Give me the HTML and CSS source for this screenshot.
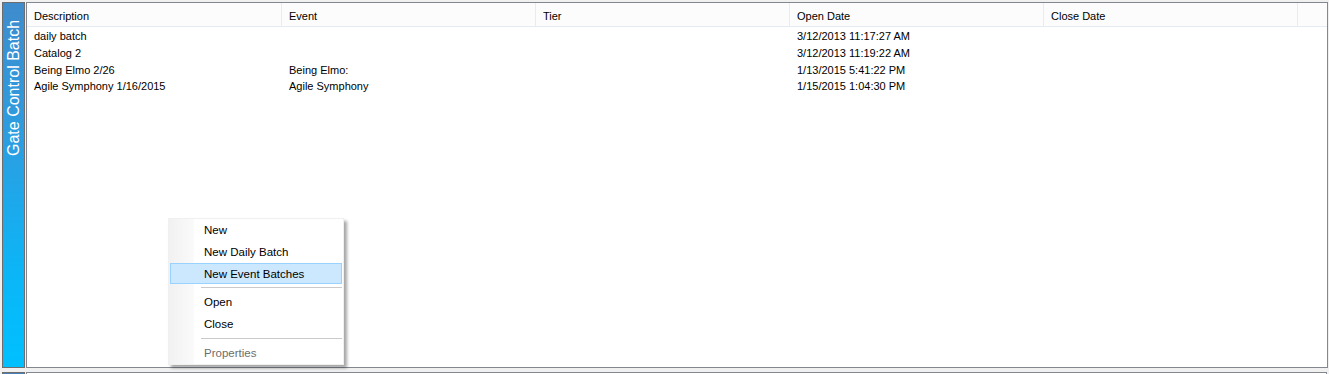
FILE: index.html
```html
<!DOCTYPE html>
<html lang="en">
<head>
    <meta charset="UTF-8">
    <title>Gate Control Batch</title>
    <link rel="stylesheet" href="styles.css">
</head>
<body>
    <div class="screen">
        <div class="dock">
            <div class="side-tab"><span>Gate Control Batch</span></div>
            <div class="grid-panel">
                <div class="grid-head">
                    <div class="col">Description</div>
                    <div class="col">Event</div>
                    <div class="col">Tier</div>
                    <div class="col">Open Date</div>
                    <div class="col">Close Date</div>
                    <div class="col filler"></div>
                </div>
                <div class="grid-body">
                    <div class="row">
                        <div class="col">daily batch</div>
                        <div class="col"></div>
                        <div class="col"></div>
                        <div class="col">3/12/2013 11:17:27 AM</div>
                        <div class="col"></div>
                    </div>
                    <div class="row">
                        <div class="col">Catalog 2</div>
                        <div class="col"></div>
                        <div class="col"></div>
                        <div class="col">3/12/2013 11:19:22 AM</div>
                        <div class="col"></div>
                    </div>
                    <div class="row">
                        <div class="col">Being Elmo 2/26</div>
                        <div class="col">Being Elmo:</div>
                        <div class="col"></div>
                        <div class="col">1/13/2015 5:41:22 PM</div>
                        <div class="col"></div>
                    </div>
                    <div class="row">
                        <div class="col">Agile Symphony 1/16/2015</div>
                        <div class="col">Agile Symphony</div>
                        <div class="col"></div>
                        <div class="col">1/15/2015 1:04:30 PM</div>
                        <div class="col"></div>
                    </div>
                </div>

                <!-- menu contextual -->
                <div class="context-menu">
                    <div class="menu-item">New</div>
                    <div class="menu-item">New Daily Batch</div>
                    <div class="menu-item active">New Event Batches</div>
                    <div class="menu-sep"></div>
                    <div class="menu-item">Open</div>
                    <div class="menu-item">Close</div>
                    <div class="menu-sep"></div>
                    <div class="menu-item disabled">Properties</div>
                </div>
            </div>
        </div>
        <div class="dock next">
            <div class="side-tab dark"></div>
            <div class="grid-panel"></div>
        </div>
    </div>
</body>
</html>
```

FILE: styles.css
```css
* {
    margin: 0;
    padding: 0;
    box-sizing: border-box;
}

body {
    background: #f0f0f0;
    font-family: 'Liberation Sans', Arial, sans-serif;
    font-size: 11px;
    color: #000;
    overflow: hidden;
}

.screen {
    height: 374px;
    overflow: hidden;
    padding: 2px;
    display: flex;
    flex-direction: column;
    gap: 4px;
}

.dock {
    display: flex;
    gap: 1px;
    height: 366px;
    flex-shrink: 0;
}

.dock.next {
    height: 20px;
}

.side-tab {
    width: 23px;
    border: 1px solid #6d6d6d;
    background: linear-gradient(to bottom, #3f8ccd 0%, #2a9fe2 40%, #0bb6f7 75%, #00c0ff 100%);
    display: flex;
    justify-content: center;
    padding-top: 3px;
}

.side-tab.dark {
    background: #4a7fb5;
}

.side-tab span {
    writing-mode: vertical-rl;
    transform: rotate(180deg);
    color: #fff;
    font-size: 16px;
    line-height: 21px;
    white-space: nowrap;
    height: 150px;
}

.grid-panel {
    flex: 1;
    position: relative;
    background: #fff;
    border: 1px solid #828790;
}

.grid-head {
    display: flex;
    height: 24px;
    background: #fcfcfc;
    border-bottom: 1px solid #e5ecf4;
}

.grid-head .col {
    width: 254px;
    padding: 7px 0 0 7px;
    border-right: 1px solid #e5ecf4;
}

.grid-head .col.filler {
    width: 29px;
    border-right: none;
}

.grid-head .col:first-child,
.row .col:first-child {
    width: 255px;
}

.grid-body {
    padding-top: 1px;
}

.row {
    display: flex;
    height: 16.7px;
    align-items: center;
}

.row .col {
    width: 254px;
    padding-left: 7px;
    white-space: nowrap;
}

.context-menu {
    position: absolute;
    left: 141px;
    top: 215px;
    width: 176px;
    background: #fff linear-gradient(to right, #f1f1f1, #fafafa 25px, #fff 25px);
    border: 1px solid #f0f0f0;
    box-shadow: 3px 3px 3px rgba(0, 0, 0, 0.35);
    font-size: 11.5px;
}

.menu-item {
    height: 22px;
    line-height: 20px;
    margin: 0 1px;
    padding-left: 33px;
    border: 1px solid transparent;
}

.menu-item.active {
    height: 21px;
    margin-bottom: 1px;
    background: #cce8ff;
    border-color: #99d1ff;
}

.menu-item.disabled {
    color: #6d6d6d;
}

.menu-sep {
    height: 1px;
    background: #cacaca;
    margin: 3px 1px 3px 32px;
}
```
